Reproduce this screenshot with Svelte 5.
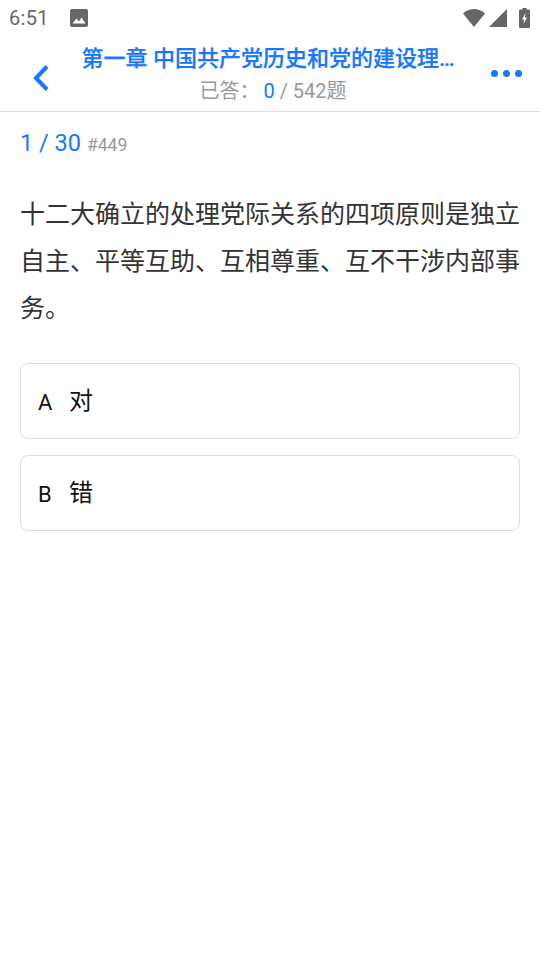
<script>
  const options = [
    { key: 'A', text: '对' },
    { key: 'B', text: '错' }
  ];
</script>

<div class="page">
  <div class="status">
    <div class="status-left">
      <span class="time">6:51</span>
      <svg class="pic" width="18" height="18" viewBox="0 0 18 18"><rect x="0" y="0" width="18" height="18" rx="2" fill="#666"/><path d="M2.5 14.5 L6.5 9.5 L9 12.5 L11.5 8.5 L15.5 14.5 Z" fill="#fff"/></svg>
    </div>
    <div class="status-right">
      <svg width="22" height="18" viewBox="0 0 22 18"><path d="M0 4.5 C3 1.7 7 0 11 0 C15 0 19 1.7 22 4.5 L11 18 Z" fill="#666"/></svg>
      <svg width="18" height="18" viewBox="0 0 18 18"><path d="M0 18 L18 0 L18 18 Z" fill="#666"/></svg>
      <svg width="11" height="20" viewBox="0 0 11 20"><path d="M3.5 0 H7.5 V1.5 H10 A1 1 0 0 1 11 2.5 V19 A1 1 0 0 1 10 20 H1 A1 1 0 0 1 0 19 V2.5 A1 1 0 0 1 1 1.5 H3.5 Z" fill="#666"/><path d="M6.5 5 L3 11.5 H5.2 L4.5 16 L8 9.5 H5.8 Z" fill="#fff"/></svg>
    </div>
  </div>

  <header class="nav">
    <button class="back" aria-label="返回">
      <svg width="18" height="28" viewBox="0 0 18 28"><path d="M15 2.5 L4 14 L15 25.5" fill="none" stroke="#1677ff" stroke-width="4"/></svg>
    </button>
    <div class="titles">
      <div class="title">第一章 中国共产党历史和党的建设理…</div>
      <div class="sub">已答：<span class="done">0</span> / 542题</div>
    </div>
    <button class="more" aria-label="更多">
      <i></i><i></i><i></i>
    </button>
  </header>

  <main class="content">
    <div class="progress"><span class="count">1 / 30</span><span class="id">#449</span></div>
    <p class="question">十二大确立的处理党际关系的四项原则是独立自主、平等互助、互相尊重、互不干涉内部事务。</p>
    <div class="options">
      {#each options as o}
        <div class="option"><span class="key">{o.key}</span><span class="text">{o.text}</span></div>
      {/each}
    </div>
  </main>
</div>

<style>
  :global(body) {
    margin: 0;
    background: #fff;
  }
  .page {
    width: 540px;
    height: 960px;
    background: #fff;
    font-family: Roboto, "Noto Sans CJK SC", sans-serif;
    overflow: hidden;
  }
  .status {
    height: 36px;
    display: flex;
    justify-content: space-between;
    align-items: center;
    padding: 0 10px 0 9px;
  }
  .status-left {
    display: flex;
    align-items: center;
    gap: 21px;
  }
  .time {
    font-size: 20px;
    color: #666;
    letter-spacing: 0.3px;
  }
  .status-right {
    display: flex;
    align-items: center;
    gap: 4px;
  }
  .status-right svg:last-child {
    margin-left: 8px;
  }
  .nav {
    height: 75px;
    border-bottom: 1px solid #ddd;
    display: flex;
    align-items: center;
    position: relative;
  }
  button {
    background: none;
    border: 0;
    padding: 0;
  }
  .back {
    width: 80px;
    display: flex;
    padding-left: 30px;
    box-sizing: border-box;
    margin-top: 8px;
  }
  .back svg {
    flex: none;
    margin-left: 2px;
  }
  .titles {
    width: 376px;
    text-align: center;
    margin-left: 0;
    padding-top: 3px;
  }
  .title {
    font-size: 22px;
    line-height: 30px;
    color: #1677ff;
    font-weight: 500;
    white-space: nowrap;
    -webkit-text-stroke: 0.25px #1677ff;
  }
  .sub {
    font-size: 20px;
    line-height: 30px;
    color: #999;
    margin-top: 2px;
    padding-left: 10px;
  }
  .done {
    color: #1677ff;
    margin-left: 4px;
  }
  .more {
    position: absolute;
    right: 18px;
    top: 34px;
    display: flex;
    gap: 5px;
  }
  .more i {
    width: 7px;
    height: 7px;
    border-radius: 50%;
    background: #1677ff;
  }
  .content {
    padding: 0 20px;
  }
  .progress {
    display: flex;
    align-items: baseline;
    gap: 6px;
    padding-top: 15px;
    line-height: 32px;
  }
  .count {
    font-size: 23.5px;
    color: #1677ff;
  }
  .id {
    font-size: 17.5px;
    color: #999;
  }
  .question {
    margin: 30px 0 0;
    font-size: 25px;
    line-height: 47px;
    color: #333;
  }
  .options {
    margin-top: 31px;
    display: flex;
    flex-direction: column;
    gap: 16px;
  }
  .option {
    height: 76px;
    box-sizing: border-box;
    border: 1px solid #ddd;
    border-radius: 8px;
    display: flex;
    align-items: center;
    padding: 0 0 6px 17px;
    color: #111;
  }
  .key {
    font-size: 22px;
    width: 31px;
    padding-top: 8px;
  }
  .text {
    font-size: 24px;
  }
</style>
